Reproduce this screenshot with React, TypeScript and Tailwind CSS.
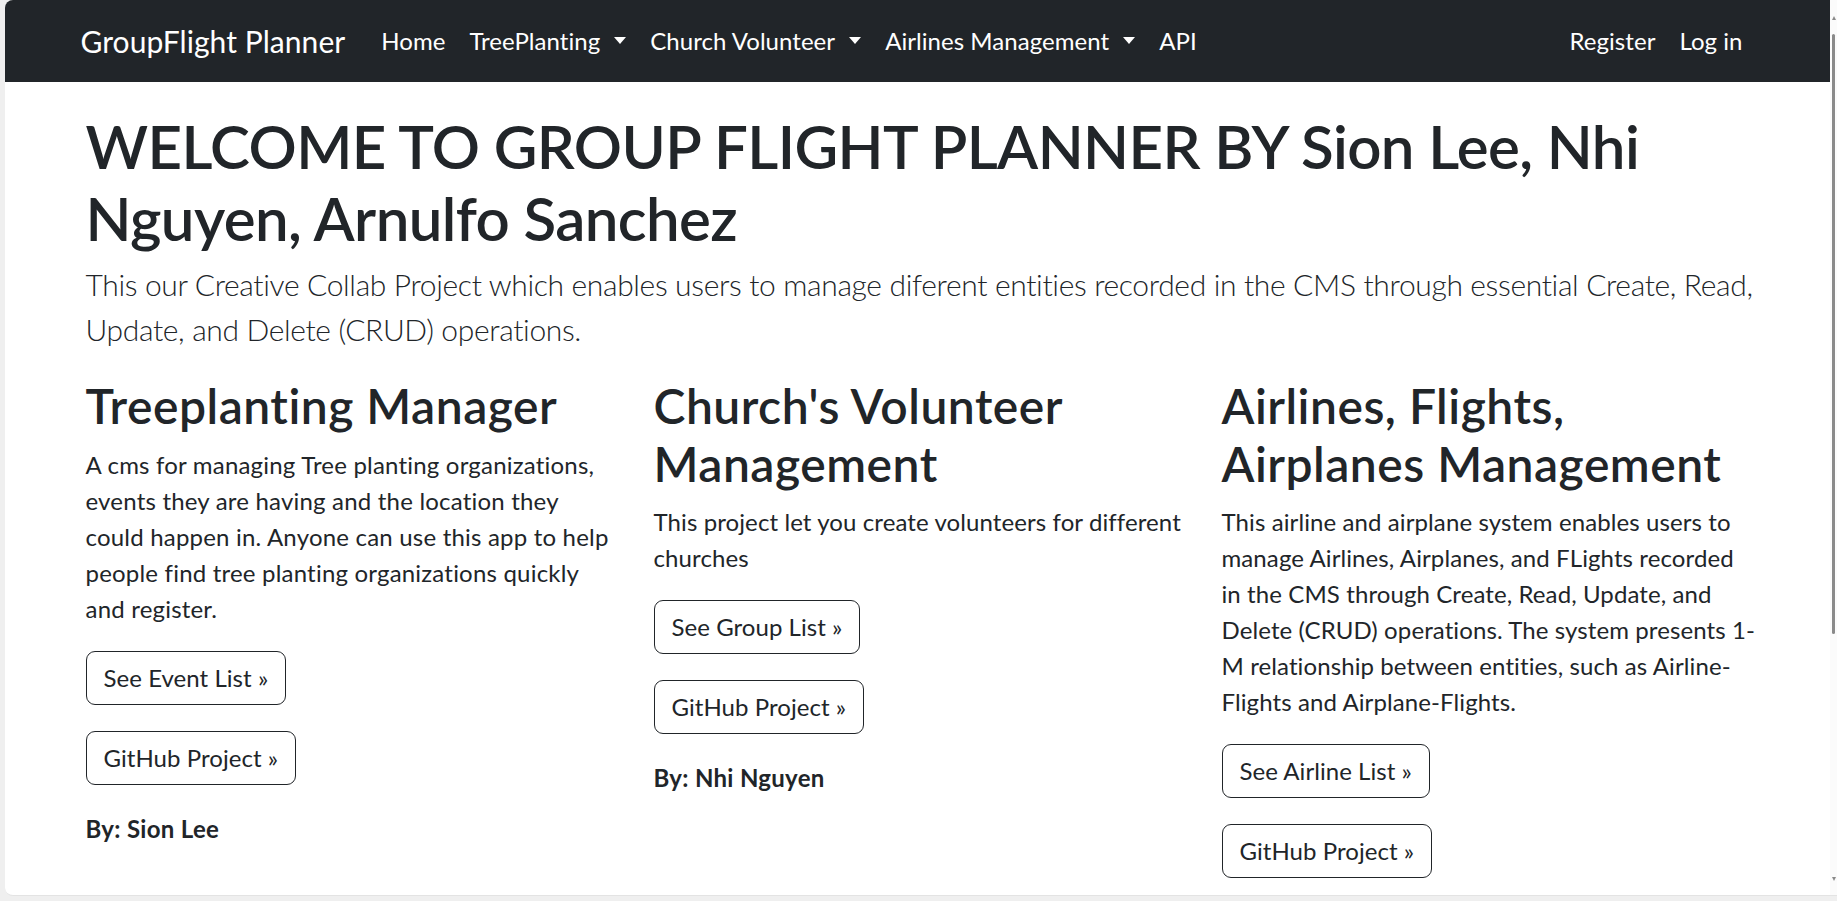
import React from "react";

function Caret() {
  return (
    <span className="ml-[14px] inline-block w-0 h-0 border-t-[7px] border-t-white border-x-[6px] border-x-transparent translate-y-[-1px]" />
  );
}

function NavLink({ label, dropdown }: { label: string; dropdown?: boolean }) {
  return (
    <a className="px-[12px] text-white text-[24px] tracking-[0.05px] leading-[36px] flex items-center whitespace-nowrap cursor-pointer">
      {label}
      {dropdown && <Caret />}
    </a>
  );
}

function OutlineButton({ label }: { label: string }) {
  return (
    <div className="mb-[26px]">
      <a className="inline-block border border-[#212529] rounded-[9px] px-[17px] py-[8px] text-[24px] leading-[36px] tracking-[0.05px] text-[#212529] cursor-pointer">
        {label}
      </a>
    </div>
  );
}

function Column({
  title,
  text,
  buttons,
  by,
  wide,
}: {
  title: string;
  text: string;
  buttons: string[];
  by?: string;
  wide?: boolean;
}) {
  return (
    <div>
      <h2 className="text-[48px] font-semibold leading-[57.6px] tracking-[0.5px] mb-[12px]">{title}</h2>
      <p className={`text-[24px] leading-[36px] mb-[24px] ${wide ? "tracking-[0.2px]" : "tracking-[0.1px]"}`}>{text}</p>
      {buttons.map((b) => (
        <OutlineButton key={b} label={b} />
      ))}
      {by && (
        <p className="text-[24px] leading-[36px] font-bold tracking-[0.3px]">{by}</p>
      )}
    </div>
  );
}

export default function App() {
  return (
    <div
      className="flex h-[901px] w-[1837px] bg-[#efefef] overflow-hidden text-[#212529]"
      style={{ fontFamily: "Lato, 'Noto Sans', sans-serif" }}
    >
      <div className="ml-[5px] mb-[5px] flex-1 flex bg-white rounded-tl-[8px] rounded-bl-[8px] overflow-hidden border-b border-[#e3e3e3]">
        <div className="flex-1 flex flex-col">
          <nav className="h-[82px] bg-[#212529] shrink-0">
            <div className="mx-auto w-[1674px] h-full flex items-center">
              <a className="text-white text-[30px] leading-[45px] tracking-[0.05px] mr-[24px] whitespace-nowrap">
                GroupFlight Planner
              </a>
              <div className="flex items-center">
                <NavLink label="Home" />
                <NavLink label="TreePlanting" dropdown />
                <NavLink label="Church Volunteer" dropdown />
                <NavLink label="Airlines Management" dropdown />
                <NavLink label="API" />
              </div>
              <div className="ml-auto flex items-center">
                <NavLink label="Register" />
                <NavLink label="Log in" />
              </div>
            </div>
          </nav>
          <main className="mx-auto w-[1684px] pl-[10px] pt-[28px]">
            <h1 className="text-[60px] font-semibold leading-[72px] tracking-[-0.6px] mb-[8px]">
              WELCOME TO GROUP FLIGHT PLANNER BY Sion Lee, Nhi Nguyen, Arnulfo Sanchez
            </h1>
            <p className="text-[30px] font-light leading-[45px] tracking-[-0.35px] mb-[25px]">
              This our Creative Collab Project which enables users to manage diferent entities recorded in the CMS
              through essential Create, Read, Update, and Delete (CRUD) operations.
            </p>
            <div className="grid grid-cols-[534px_534px_534px] gap-x-[34px]">
              <Column
                title="Treeplanting Manager"
                text="A cms for managing Tree planting organizations, events they are having and the location they could happen in. Anyone can use this app to help people find tree planting organizations quickly and register."
                buttons={["See Event List »", "GitHub Project »"]}
                by="By: Sion Lee"
                wide
              />
              <Column
                title="Church's Volunteer Management"
                text="This project let you create volunteers for different churches"
                buttons={["See Group List »", "GitHub Project »"]}
                by="By: Nhi Nguyen"
              />
              <Column
                title="Airlines, Flights, Airplanes Management"
                text="This airline and airplane system enables users to manage Airlines, Airplanes, and FLights recorded in the CMS through Create, Read, Update, and Delete (CRUD) operations. The system presents 1-M relationship between entities, such as Airline-Flights and Airplane-Flights."
                buttons={["See Airline List »", "GitHub Project »"]}
              />
            </div>
          </main>
        </div>
        <div className="w-[7px] shrink-0 bg-[#fbfbfb] flex flex-col items-center pt-[16px]">
          <span className="w-0 h-0 border-b-[4px] border-b-[#8a8a8a] border-x-[2px] border-x-transparent" />
          <div className="mt-[14px] w-[3px] h-[600px] rounded-full bg-[#8a8a8a]" />
          <div className="flex-1" />
          <span className="mb-[14px] w-0 h-0 border-t-[4px] border-t-[#8a8a8a] border-x-[2px] border-x-transparent" />
        </div>
      </div>
    </div>
  );
}
